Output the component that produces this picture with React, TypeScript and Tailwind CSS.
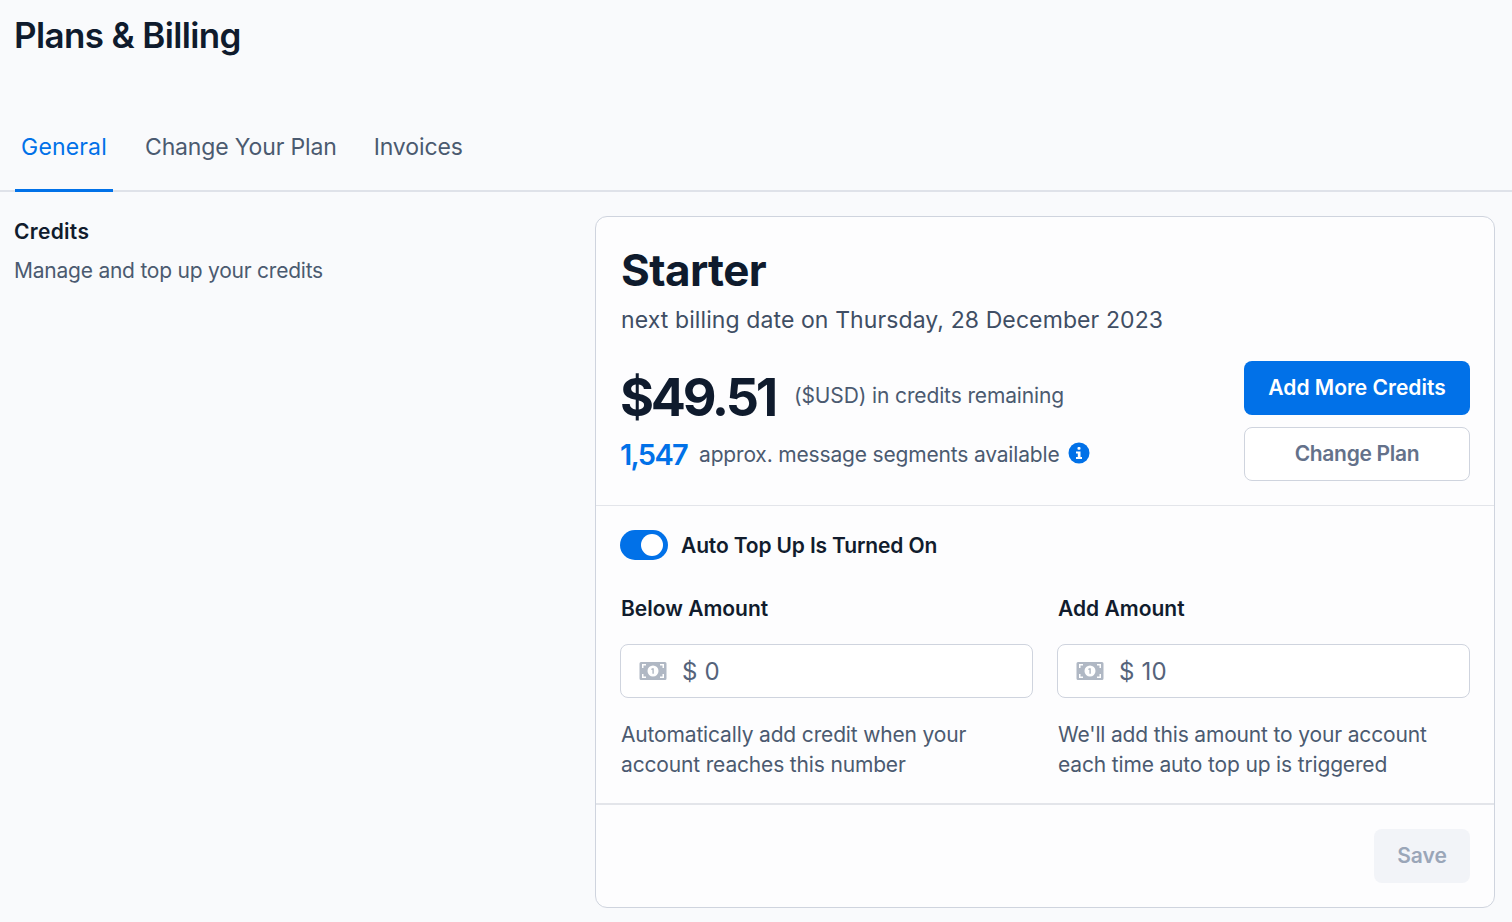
export default function App() {
  const Bill = () => (
    <svg width="28" height="20" viewBox="0 0 28 20" className="shrink-0">
      <path fillRule="evenodd" clipRule="evenodd" fill="#b0b8c4" d="M2 1h24a1.500 1.500 0 0 1 1.500 1.500v15A1.500 1.500 0 0 1 26 19H2a1.500 1.500 0 0 1-1.500-1.500v-15A1.500 1.500 0 0 1 2 1ZM14 4.500a5.500 5.500 0 1 0 0 11 5.500 5.500 0 0 0 0-11ZM3 3v4h1.500V4.500H7V3H3Zm18 0v1.500h2.500V7H25V3h-4ZM3 13v4h4v-1.500H4.500V13H3Zm20.500 0v2.500H21V17h4v-4h-1.500Z" />
      <path fill="#b0b8c4" d="M13 7.300h1.800v5.400h-1.400V8.800l-.9.300-.3-1.100 .8-.7Z" />
    </svg>
  );
  const Field = ({ label, value, help }: { label: string; value: string; help: string[] }) => (
    <div className="flex-1 min-w-0">
      <div className="pl-[1px] text-[21px] leading-[28px] font-semibold text-[#111c2d]">{label}</div>
      <div className="mt-[21px] h-[54px] rounded-[8px] border border-[#cfd4de] bg-white flex items-center pl-[18px] gap-[15px]">
        <Bill />
        <span className="pt-[1px] text-[24px] tracking-[0.2px] text-[#55637a]">$ {value}</span>
      </div>
      <div className="mt-[22px] pl-[1px] text-[21px] leading-[30px] tracking-[-0.16px] text-[#4b5a70]">
        {help.map((h) => (
          <div key={h}>{h}</div>
        ))}
      </div>
    </div>
  );
  return (
    <div className="h-[922px] overflow-hidden bg-[#f9fafc] font-['Inter','Liberation_Sans',sans-serif] [font-size:22px]">
      <h1 className="pl-[14px] pt-[11px] text-[35px] leading-[48px] font-semibold text-[#0f1b2d] tracking-[-0.63px]">Plans &amp; Billing</h1>
      <div className="mt-[59px] border-b-2 border-[#dfe2e9] h-[74px] flex pl-[15px] text-[23px]">
        <div className="h-[74px] w-[98px] border-b-[3px] border-[#0171e8] flex items-center justify-center pb-[13px] tracking-[0.15px] text-[#0171e8]">General</div>
        <div className="h-[74px] ml-[32px] flex items-center pb-[16px] tracking-[-0.15px] text-[#4b5a70]">Change Your Plan</div>
        <div className="h-[74px] ml-[37px] flex items-center pb-[16px] tracking-[-0.1px] text-[#4b5a70]">Invoices</div>
      </div>
      <div className="flex mt-[24px] pl-[14px] pr-[17px]">
        <div className="w-[581px] shrink-0 pt-[2px]">
          <div className="text-[21px] leading-[28px] font-semibold text-[#111c2d] tracking-[0.3px]">Credits</div>
          <div className="mt-[11px] text-[21px] leading-[28px] tracking-[-0.23px] text-[#4b5a70]">Manage and top up your credits</div>
        </div>
        <div className="flex-1 h-[692px] bg-[#fdfdfe] border border-[#cfd4de] rounded-[12px]">
          <div className="h-[289px] border-b border-[#e3e5ea] px-[24px] pt-[26px]">
            <div className="pl-[1px] text-[44px] leading-[54px] font-bold text-[#0f1b2d] tracking-[-0.6px]">Starter</div>
            <div className="mt-[7px] pl-[1px] text-[23px] leading-[32px] tracking-[0.1px] text-[#3f4e64]">next billing date on Thursday, 28 December 2023</div>
            <div className="mt-[25px] flex justify-between">
              <div>
                <div className="flex items-center h-[70px]">
                  <span className="pt-[3px] text-[52px] leading-[70px] font-bold text-[#0f1b2d] tracking-[-3.2px]">$49.51</span>
                  <span className="ml-[19px] text-[21px] tracking-[-0.13px] text-[#4b5a70]">($USD) in credits remaining</span>
                </div>
                <div className="flex items-center h-[38px] mt-[5px]">
                  <span className="text-[29px] font-semibold text-[#0171e8] tracking-[-1.7px]">1,547</span>
                  <span className="ml-[12px] text-[21px] tracking-[-0.17px] text-[#4b5a70]">approx. message segments available</span>
                  <svg width="22" height="22" viewBox="0 0 22 22" className="ml-[8px] -translate-y-[2px]">
                    <circle cx="11" cy="11" r="10.500" fill="#0171e8" />
                    <rect x="9.500" y="5" width="3" height="2.800" rx="1" fill="#fff" />
                    <path d="M8 9.500h4.500V15H14v2H8v-2h1.800v-3.500H8Z" fill="#fff" />
                  </svg>
                </div>
              </div>
              <div className="w-[226px] flex flex-col gap-[12px]">
                <div className="h-[54px] rounded-[8px] bg-[#0171e8] flex items-center justify-center text-[21px] font-semibold text-white">Add More Credits</div>
                <div className="h-[54px] rounded-[8px] border border-[#cfd4de] bg-white flex items-center justify-center text-[21px] tracking-[-0.3px] font-semibold text-[#64718a]">Change Plan</div>
              </div>
            </div>
          </div>
          <div className="h-[299px] border-b-2 border-[#e3e5ea] px-[24px] pt-[24px]">
            <div className="flex items-center gap-[13px] h-[30px]">
              <div className="w-[48px] h-[30px] rounded-full bg-[#0171e8] flex items-center justify-end pr-[5px]">
                <div className="w-[22px] h-[22px] rounded-full bg-white" />
              </div>
              <span className="pt-[1px] text-[21px] leading-[28px] tracking-[-0.15px] font-semibold text-[#111c2d]">Auto Top Up Is Turned On</span>
            </div>
            <div className="mt-[35px] flex gap-[24px]">
              <Field label="Below Amount" value="0" help={["Automatically add credit when your", "account reaches this number"]} />
              <Field label="Add Amount" value="10" help={["We'll add this amount to your account", "each time auto top up is triggered"]} />
            </div>
          </div>
          <div className="flex justify-end px-[24px] pt-[24px]">
            <div className="w-[96px] h-[54px] rounded-[8px] bg-[#f2f4f8] flex items-center justify-center text-[21px] font-semibold text-[#9aa6b8]">Save</div>
          </div>
        </div>
      </div>
    </div>
  );
}
